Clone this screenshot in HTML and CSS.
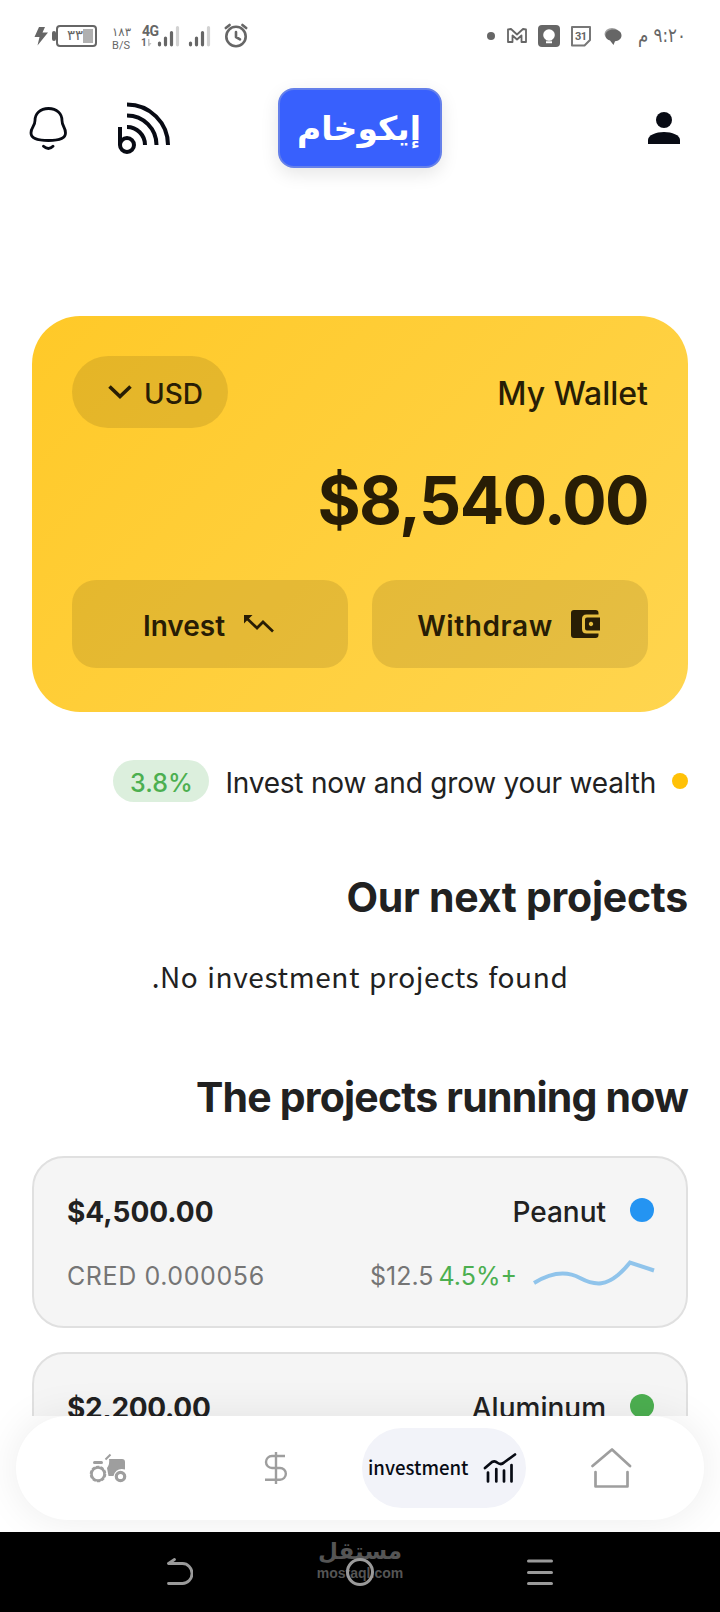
FILE: index.html
```html
<!DOCTYPE html>
<html lang="en">
<head>
<meta charset="utf-8">
<title>Wallet</title>
<link rel="stylesheet" href="styles.css">
</head>
<body>
<div class="screen">
  <div class="status">
    <svg class="status-left" width="250" height="40" viewBox="0 16 250 40">
      <g fill="#666">
        <path d="M39 27h6l-2.500 5.500h5.500L37.500 45.500l2-8.500h-5z"/>
        <rect x="52" y="31" width="4" height="10" rx="2"/>
        <rect x="57" y="26" width="39" height="20" rx="3" fill="none" stroke="#666" stroke-width="2"/>
        <rect x="83" y="29" width="10" height="14" fill="#b0b0b0"/>
        <text class="ar" x="67" y="40" font-size="14" textLength="16" lengthAdjust="spacingAndGlyphs">٣٣</text>
        <text class="ar" x="112" y="36" font-size="12" textLength="19" lengthAdjust="spacingAndGlyphs">١٨٣</text>
        <text class="rb" x="112" y="49" font-size="11" textLength="18">B/S</text>
        <text class="rb b" x="142" y="36" font-size="14" textLength="17">4G</text>
        <text class="rb b" x="141" y="46" font-size="10">1</text>
        <path d="M148 39h1.500v4h2l-2.500 3.500l-1-1z" fill="#c4c4c4"/>
      </g>
      <g stroke="#666" stroke-width="3.200" stroke-linecap="round">
        <path d="M159.500 43v1.800M165.500 38v6.800M171.500 32.500v12.300M190.500 43v1.800M196.500 38v6.800M202.500 32.500v12.300"/>
        <path stroke="#d2d2d2" d="M177.500 27.500v17.300M208.500 27.500v17.300"/>
      </g>
      <g fill="none" stroke="#666" stroke-width="2.600" stroke-linecap="round" stroke-linejoin="round">
        <circle cx="236" cy="36.500" r="9.700"/><path d="M236 32v5l4 2.300M225.800 28l3.800-3M246.200 28l-3.800-3"/>
      </g>
    </svg>
    <svg class="status-right" width="220" height="40" viewBox="480 16 220 40">
      <circle cx="491" cy="36" r="4" fill="#666"/>
      <path d="M508 42V29.500l3-.5l6 5.500l6-5.500l3 .5V42h-4.500v-6.500l-4.500 4l-4.500-4V42z" fill="none" stroke="#666" stroke-width="1.800" stroke-linejoin="round"/>
      <rect x="538" y="25" width="22" height="22" rx="4" fill="#666"/>
      <circle cx="549" cy="35" r="5.800" fill="#fff"/><path d="M546 38h6v2.200h-6zM546 41.200h6v2h-6z" fill="#fff"/>
      <path d="M572 27h18v13l-5.500 5.500H572z" fill="none" stroke="#777" stroke-width="2" stroke-linejoin="round"/>
      <text class="rb b" x="575" y="40" font-size="11" fill="#666" textLength="12">31</text>
      <ellipse cx="612" cy="34" rx="7.500" ry="6" fill="#a0a0a0"/>
      <path d="M613.500 29.500c5 0 8 2.500 8 6s-3 5.500-6.500 5.800l-1.500 3.700l-3.500-4.500c-3-1-4.500-2.500-4.500-5c0-3.500 3-6 8-6z" fill="#666"/>
      <text class="ar" x="686" y="42" font-size="20" fill="#666" text-anchor="end" textLength="48" lengthAdjust="spacingAndGlyphs" direction="ltr">&#x202D;م ٩:٢٠&#x202C;</text>
    </svg>
  </div>

  <header class="top">
    <div class="top-side">
      <svg width="40" height="46" viewBox="28 105 40 46" fill="none" stroke="#080b14" stroke-width="2.800" stroke-linecap="round">
        <path d="M48.500 108.500c-8.500 0-13.500 5.500-13.500 12c0 6-4 6.500-4 12.500c0 5.500 6 7.500 17.500 7.500s17-2 17-7.500c0-6-3.500-6.500-3.500-12.500c0-6.500-5-12-13.500-12z"/><path d="M43.500 146.300q5 4.500 9.500 0"/>
      </svg>
      <svg width="54" height="54" viewBox="117 101 54 54" fill="none" stroke="#080b14" stroke-width="4">
        <circle cx="127" cy="145" r="7"/><path d="M120 127v18M127 104.500a41 40.500 0 0 1 41 40.500M127 115.500a29.500 29.500 0 0 1 29.500 29.500M127 127a18 18 0 0 1 18 18"/>
      </svg>
    </div>
    <div class="brand" lang="ar" dir="rtl"><span>إيكوخام</span></div>
    <svg class="person" width="32" height="32" viewBox="0 0 32 32" fill="#080b14"><circle cx="16" cy="8" r="8"/><path d="M0 32v-4c0-5 8-8 16-8s16 3 16 8v4z"/></svg>
  </header>

  <main class="content">
    <section class="wallet">
      <div class="wallet-head">
        <button class="currency">
          <svg width="24" height="16" viewBox="0 0 24 16" fill="none" stroke="#281d05" stroke-width="3.600"><path d="M1.500 2.500L12 12.500L22.500 2.500"/></svg>
          <span class="m t-usd">USD</span>
        </button>
        <span class="m t-wallet">My Wallet</span>
      </div>
      <div class="amount"><span class="m">$8,540.00</span></div>
      <div class="actions">
        <button class="action">
          <span class="m">Invest</span>
          <svg width="32" height="20" viewBox="0 0 32 20" fill="none" stroke="#281d05" stroke-width="2.700"><path d="M4 4.500L14 14L20 8L30 17.500"/><path d="M1 1h8.500L1 9.500z" fill="#281d05" stroke="none"/></svg>
        </button>
        <button class="action">
          <span class="m t-withdraw">Withdraw</span>
          <svg width="30" height="28" viewBox="0 0 30 28" fill="#281d05"><path d="M3 0h21.500q3 0 3 3v1.500H15.500q-4.500 0-4.500 4.500v10q0 4.500 4.500 4.500h12V25q0 3-3 3H3q-3 0-3-3V3q0-3 3-3z"/><path fill-rule="evenodd" d="M16 7.500h13v13H16q-2 0-2-2v-9q0-2 2-2zM20 11.800a2.200 2.200 0 1 0 .01 0z"/></svg>
        </button>
      </div>
    </section>

    <div class="tip">
      <span class="rate">3.8%</span>
      <span class="m t-tip">Invest now and grow your wealth</span>
      <i class="tip-dot"></i>
    </div>

    <h2 class="title title-next">Our next projects</h2>
    <p class="empty">.No investment projects found</p>
    <h2 class="title title-running">The projects running now</h2>

    <div class="projects">
      <article class="project">
        <div class="row"><span class="sum">$4,500.00</span><span class="name"><span>Peanut</span><i class="dot blue"></i></span></div>
        <div class="row low"><span class="cred">CRED 0.000056</span>
          <span class="trend"><span class="price">$12.5</span><span class="gain">4.5%+</span>
          <svg width="122" height="28" viewBox="533 1257 122 28" fill="none" stroke="#90c4eb" stroke-width="4"><path d="M534 1282Q560 1266 580 1277C597 1286 607 1283 618 1274Q624 1269 630 1261.500L654 1269.500"/></svg></span>
        </div>
      </article>
      <article class="project">
        <div class="row"><span class="sum tight">$2,200.00</span><span class="name"><span>Aluminum</span><i class="dot green"></i></span></div>
      </article>
    </div>
  </main>

  <nav class="tabs">
    <a class="tab"><svg width="38" height="30" viewBox="89 1452 38 30" fill="#9e9e9e">
      <circle cx="98" cy="1473" r="6.500" fill="none" stroke="#9e9e9e" stroke-width="2.600"/><circle cx="98" cy="1473" r="7.600" fill="none" stroke="#9e9e9e" stroke-width="1.400" stroke-dasharray="3.300 1.500"/>
      <rect x="93" y="1460" width="10" height="3" rx="1.500"/><path d="M105.500 1458.500l5-5" stroke="#9e9e9e" stroke-width="2"/>
      <path d="M109 1458h13q3 0 3 3v7.500q-9-2-11.500 6.500h-5l-1.500-8q3-4 2-9z"/>
      <circle cx="120.500" cy="1475.500" r="4.200" fill="none" stroke="#9e9e9e" stroke-width="3.200"/></svg></a>
    <a class="tab"><svg width="24" height="34" viewBox="264 1451 24 34" fill="none" stroke="#9e9e9e" stroke-width="2.400"><path d="M276 1452v32M285 1456h-13a6 6 0 0 0 0 12h8a5.800 5.800 0 0 1 0 11.700h-15"/></svg></a>
    <a class="tab active"><span class="m">investment</span>
      <svg width="34" height="32" viewBox="483 1453 34 32" fill="none" stroke="#080b14" stroke-width="2.700" stroke-linecap="round" stroke-linejoin="round"><path d="M485 1469l7-6q3-1.500 5 .5q4 3 7 0l11-8M488 1473.500v9M496.300 1470v12.500M504 1471.500v11M511.500 1466v16.500"/></svg></a>
    <a class="tab"><svg width="42" height="42" viewBox="592 1447 42 42" fill="none" stroke="#9e9e9e" stroke-width="2.700" stroke-linecap="round" stroke-linejoin="round"><path d="M593.500 1466L613 1449.500L631 1466M596.500 1472v14.500h32V1472"/></svg></a>
  </nav>

  <footer class="system">
    <svg width="26" height="28" viewBox="167 1558 26 28" fill="none" stroke="#9a9a9a" stroke-width="2.800" stroke-linecap="round"><path d="M168.500 1563.500h14a9.500 10 0 0 1 0 20h-14M168.500 1563.500l6-4" /></svg>
    <div class="home">
      <div class="mark"><span class="mark-ar" lang="ar" dir="rtl">مستقل</span><span class="mark-en">mostaql.com</span></div>
      <i class="ring"></i>
    </div>
    <svg width="26" height="28" viewBox="0 0 26 28" stroke="#9a9a9a" stroke-width="3" stroke-linecap="round"><path d="M1.500 3h23M1.500 14.500h23M1.500 25.500h23"/></svg>
  </footer>
</div>
</body>
</html>
```
FILE: styles.css
```css
* { box-sizing: border-box; }
body { margin: 0; background: #fff; font-family: Inter, "Liberation Sans", sans-serif; color: #212121; }
.screen { width: 720px; height: 1612px; overflow: hidden; position: relative; background: #fff; }
svg { display: block; flex: none; }
button { border: 0; margin: 0; padding: 0; font: inherit; color: inherit; }
h2, p { margin: 0; }
.m, .title, .sum, .cred { white-space: nowrap; }
.ar { font-family: "DejaVu Sans", sans-serif; }
.rb { font-family: Roboto, sans-serif; }
.b { font-weight: 700; }

.status { display: flex; justify-content: space-between; height: 72px; padding: 16px 20px 0 0; }

.top { display: grid; grid-template-columns: 1fr 164px 1fr; align-items: start; height: 244px; padding: 16px 40px 0 28px; }
.top-side { display: flex; gap: 49px; padding-top: 13px; }
.top-side svg:first-child { margin-top: 4px; }
.brand { height: 80px; width: 164px; margin-left: 6px; padding-right: 2px; border: 2px solid #6580ea; border-radius: 16px; background: #3860fd; box-shadow: 0 6px 18px rgba(0,0,0,.1); color: #fff; font: 700 33px/78px "DejaVu Sans", sans-serif; text-align: center; }
.person { justify-self: end; margin-top: 24px; }

.content { height: 1100px; overflow: hidden; padding: 0 32px; }
.wallet { height: 396px; padding: 40px; border-radius: 48px; background: linear-gradient(135deg, #ffc928, #ffd54f); color: #281d05; }
.wallet-head { display: flex; justify-content: space-between; align-items: center; height: 72px; }
.currency { display: flex; align-items: center; gap: 12px; width: 156px; height: 72px; padding-left: 36px; border-radius: 36px; background: rgba(0,0,0,.1); }
.t-usd { font-size: 28px; font-weight: 500; padding-top: 3px; }
.t-wallet { font-size: 32px; font-weight: 500; padding-top: 3px; }
.amount { height: 152px; line-height: 144px; font-size: 66px; font-weight: 700; text-align: right; letter-spacing: -1.6px; }
.actions { display: grid; grid-template-columns: 1fr 1fr; gap: 24px; }
.action { display: flex; align-items: center; justify-content: center; gap: 18px; height: 88px; padding-right: 2px; border-radius: 24px; background: rgba(0,0,0,.1); font-size: 28px; font-weight: 600; }
.action .m { padding-top: 3px; }
.t-withdraw { letter-spacing: .6px; }

.tip { display: flex; align-items: center; justify-content: flex-end; gap: 16px; height: 42px; margin-top: 48px; }
.rate { width: 96px; height: 42px; border-radius: 21px; background: #dcefdd; color: #4caf50; font-size: 25px; font-weight: 500; line-height: 46px; text-align: center; }
.t-tip { font-size: 28px; letter-spacing: -.2px; padding-top: 4px; }
.tip-dot { width: 16px; height: 16px; border-radius: 50%; background: #ffc107; }

.title { height: 50px; margin-top: 70px; line-height: 50px; font-size: 41px; font-weight: 700; text-align: right; }
.title-next { letter-spacing: -.25px; }
.empty { height: 40px; margin-top: 34px; line-height: 40px; font-family: "Noto Sans CJK SC", sans-serif; font-size: 28px; text-align: center; letter-spacing: .6px; word-spacing: 2px; }
.title-running { margin-top: 76px; letter-spacing: -.8px; }

.projects { display: grid; gap: 24px; margin-top: 34px; }
.project { height: 172px; padding: 30px 32px 0 33px; border: 2px solid #e0e0e0; border-radius: 32px; background: #f5f5f5; }
.row { display: flex; justify-content: space-between; align-items: center; height: 48px; }
.sum { font-size: 28px; font-weight: 700; }
.tight { letter-spacing: -.3px; }
.name { display: flex; align-items: center; gap: 24px; font-size: 28px; font-weight: 500; }
.dot { width: 24px; height: 24px; margin-bottom: 4px; border-radius: 50%; }
.blue { background: #2494f2; }
.green { background: #4caf50; }
.low { margin-top: 16px; font-size: 25px; color: #757575; }
.cred { letter-spacing: .6px; }
.trend { display: flex; align-items: center; }
.trend svg { margin: 0 -1px 9px 16px; }
.gain { color: #4caf50; margin-left: 5px; }

.tabs { position: absolute; left: 16px; right: 16px; top: 1416px; height: 104px; padding: 0 8px; display: grid; grid-template-columns: 1fr 1fr 1fr 1fr; border-radius: 52px; background: #fff; box-shadow: 0 0 40px rgba(0,0,0,.08); }
.tab { display: flex; align-items: center; justify-content: center; }
.active { align-self: center; justify-self: center; justify-content: space-between; width: 164px; height: 80px; padding: 0 9px 0 6px; border-radius: 40px; background: #f2f3f9; font-family: "Noto Sans CJK SC", sans-serif; font-weight: 500; font-size: 18.6px; color: #080b14; }
.active .m { padding-bottom: 3px; }

.system { position: absolute; left: 0; right: 0; bottom: 0; height: 80px; padding: 0 167px; background: #000; display: flex; align-items: center; justify-content: space-between; }
.home { position: relative; width: 88px; height: 80px; }
.mark { text-align: center; color: #555; padding-top: 5px; }
.mark-ar { display: block; font: 700 23px/28px "DejaVu Sans", sans-serif; }
.mark-en { display: block; font: 700 14px/16px "Liberation Sans", sans-serif; }
.ring { position: absolute; left: 30px; top: 26px; width: 28px; height: 28px; border: 3px solid #9a9a9a; border-radius: 50%; }
```
